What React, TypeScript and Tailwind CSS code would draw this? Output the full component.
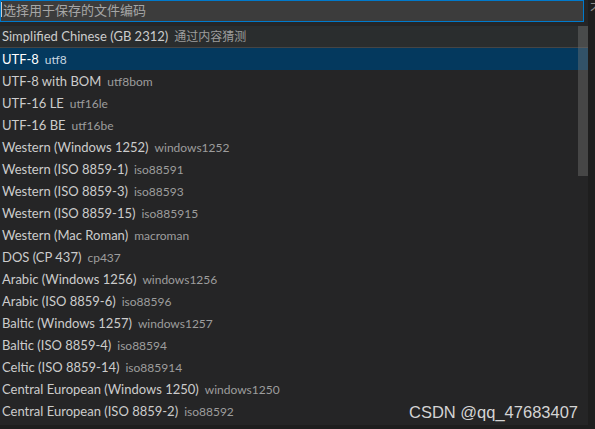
import React from 'react';

const encodings: [string, string][] = [
  ['UTF-8', 'utf8'],
  ['UTF-8 with BOM', 'utf8bom'],
  ['UTF-16 LE', 'utf16le'],
  ['UTF-16 BE', 'utf16be'],
  ['Western (Windows 1252)', 'windows1252'],
  ['Western (ISO 8859-1)', 'iso88591'],
  ['Western (ISO 8859-3)', 'iso88593'],
  ['Western (ISO 8859-15)', 'iso885915'],
  ['Western (Mac Roman)', 'macroman'],
  ['DOS (CP 437)', 'cp437'],
  ['Arabic (Windows 1256)', 'windows1256'],
  ['Arabic (ISO 8859-6)', 'iso88596'],
  ['Baltic (Windows 1257)', 'windows1257'],
  ['Baltic (ISO 8859-4)', 'iso88594'],
  ['Celtic (ISO 8859-14)', 'iso885914'],
  ['Central European (Windows 1250)', 'windows1250'],
  ['Central European (ISO 8859-2)', 'iso88592'],
];

const font = "font-['Lato','Noto_Sans_CJK_SC',sans-serif]";

const Row: React.FC<{ label: string; desc: string; selected?: boolean }> = ({ label, desc, selected }) => (
  <div className={`flex items-center h-[22px] pl-[2px] pt-[1px] gap-[6px] ${selected ? 'bg-[#04395e]' : ''}`}>
    <span className={`text-[13px] ${selected ? 'text-white' : 'text-[#cccccc]'}`}>{label}</span>
    <span className={`text-[12px] ${selected ? 'text-[#c8d6e0]' : 'text-[#9d9d9d]'}`}>{desc}</span>
  </div>
);

export default function App() {
  return (
    <div className={`relative w-[595px] h-[429px] overflow-hidden bg-[#1e1e1e] flex ${font}`}>
      <div className="w-[588px] h-[425px] bg-[#252526] flex flex-col">
        <div className="w-[584px] h-[22px] pb-[3px] bg-[#3c3c3c] border border-[#007acc] flex items-center text-[13px] text-[#a6a6a6] leading-none font-['Noto_Sans_CJK_SC',sans-serif]">
          <span className="w-px h-[15px] bg-[#cccccc] mr-[1px]" />
          选择用于保存的文件编码
        </div>
        <div className="mt-[4px] flex flex-col">
          <div className="flex items-center h-[22px] pl-[2px] pt-[1px] gap-[6px] bg-[#2a2d2e] border-b border-[#454545]">
            <span className="text-[13px] text-[#cccccc]">Simplified Chinese (GB 2312)</span>
            <span className="text-[12px] text-[#9d9d9d]">通过内容猜测</span>
          </div>
          {encodings.map(([l, d], i) => (
            <Row key={l} label={l} desc={d} selected={i === 0} />
          ))}
        </div>
      </div>
      <div className="absolute left-[578px] top-[26px] w-[10px] h-[150px] bg-[rgba(121,121,121,0.4)]" />
      <div className="absolute left-[590px] top-[2px] text-[13px] text-[#8a8a8a] leading-none">不</div>
      <div className="absolute left-[409px] top-[400px] text-[16.5px] text-[#d4d4d4] font-['Liberation_Sans',sans-serif]">
        CSDN @qq_47683407
      </div>
    </div>
  );
}
